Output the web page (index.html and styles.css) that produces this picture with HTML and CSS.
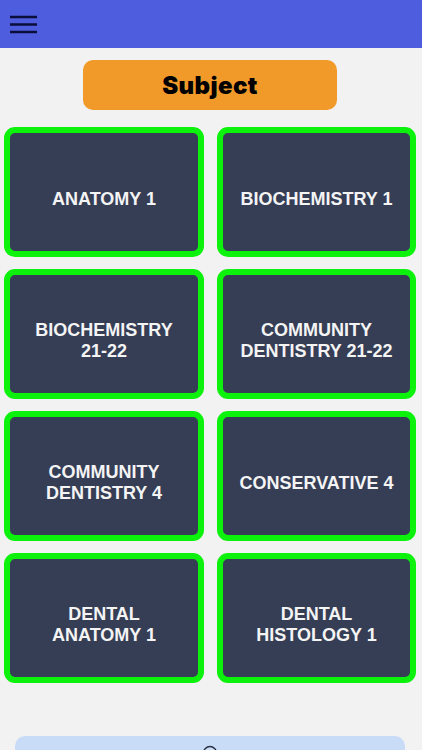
FILE: index.html
```html
<!DOCTYPE html>
<html>
<head>
<meta charset="utf-8">
<link rel="stylesheet" href="styles.css">
</head>
<body>
<header class="topbar">
  <button class="menu" aria-label="menu">
    <svg width="28" height="20" viewBox="0 0 28 20">
      <path d="M0 3H27M0 10.5H27M0 18H27" stroke="#0b0d3a" stroke-width="2.4" fill="none"/>
    </svg>
  </button>
</header>
<main class="content">
  <div class="title-wrap"><div class="title">Subject</div></div>
  <div class="grid">
    <div class="card"><span>ANATOMY 1</span></div>
    <div class="card"><span>BIOCHEMISTRY 1</span></div>
    <div class="card"><span>BIOCHEMISTRY<br>21-22</span></div>
    <div class="card"><span>COMMUNITY<br>DENTISTRY 21-22</span></div>
    <div class="card"><span>COMMUNITY<br>DENTISTRY 4</span></div>
    <div class="card"><span>CONSERVATIVE 4</span></div>
    <div class="card"><span>DENTAL<br>ANATOMY 1</span></div>
    <div class="card"><span>DENTAL<br>HISTOLOGY 1</span></div>
  </div>
  <div class="bottom">
    <svg class="bicon" width="16" height="16" viewBox="0 0 16 16">
      <circle cx="8" cy="8" r="6.5" stroke="#2a3040" stroke-width="1.4" fill="none"/>
    </svg>
  </div>
</main>
</body>
</html>
```
FILE: styles.css
```css
html, body {
  margin: 0;
  padding: 0;
  background: #f2f2f2;
  overflow: hidden;
  height: 750px;
}
.topbar {
  height: 48px;
  background: #4e5cde;
  display: flex;
  align-items: center;
}
.menu {
  background: none;
  border: 0;
  padding: 0;
  margin: 0 0 0 10px;
  width: 28px;
  height: 20px;
  display: block;
}
.menu svg { display: block; }
.title-wrap {
  display: flex;
  justify-content: center;
  padding-top: 12px;
  padding-right: 2px;
}
.title {
  width: 254px;
  height: 50px;
  background: #f19a2a;
  border-radius: 10px;
  display: flex;
  align-items: center;
  justify-content: center;
  font-family: Inter, "Liberation Sans", sans-serif;
  font-weight: 900;
  font-size: 24px;
  letter-spacing: 0.4px;
  color: #000;
}
.grid {
  margin-top: 17px;
  padding-left: 4px;
  display: grid;
  grid-template-columns: 200px 199px;
  grid-auto-rows: 130px;
  column-gap: 13px;
  row-gap: 12px;
}
.card {
  background: #353e55;
  border: 6px solid #0cf20c;
  border-radius: 11px;
  display: flex;
  align-items: center;
  justify-content: center;
  text-align: center;
  padding-top: 14px;
  box-sizing: border-box;
  color: #f4f4f4;
  font-family: "Liberation Sans", Arial, sans-serif;
  font-weight: 700;
  font-size: 18px;
  line-height: 21px;
}
.bottom {
  margin: 53px 0 0 15px;
  width: 390px;
  height: 14px;
  overflow: hidden;
  background: #c8dcf8;
  border-radius: 10px 10px 0 0;
  display: flex;
  justify-content: center;
  padding-top: 9px;
  box-sizing: border-box;
}
.bicon { display: block; margin-left: -1px; flex: none; }
```
